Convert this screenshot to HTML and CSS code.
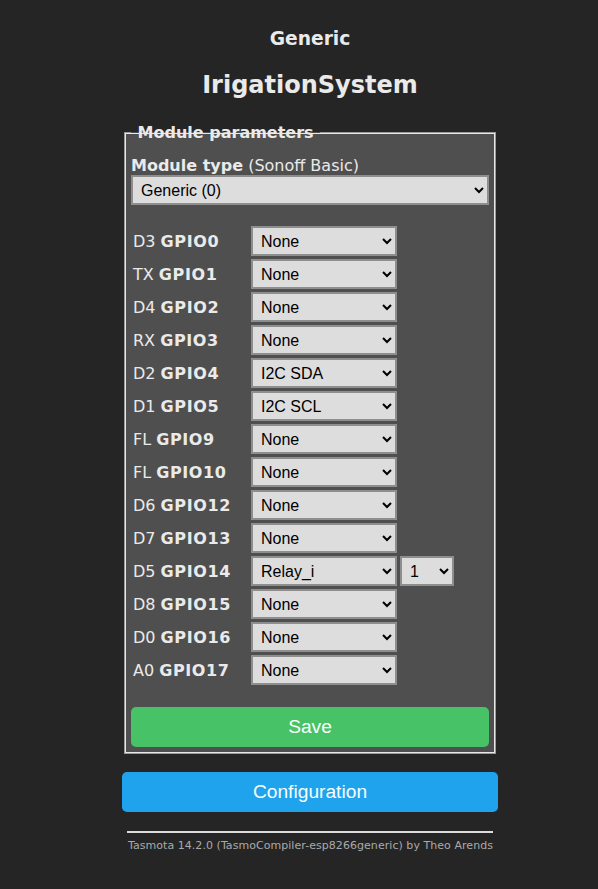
FILE: index.html
```html
<!DOCTYPE html>
<html>
<head>
<meta charset="utf-8">
<link rel="stylesheet" href="styles.css">
</head>
<body>
<div class="page">
  <div class="head">
    <h3 class="dev">Generic</h3>
    <h2 class="host">IrigationSystem</h2>
  </div>
  <fieldset class="box">
    <legend class="lg"><b>&nbsp;Module parameters&nbsp;</b></legend>
    <div class="mtype"><b>Module type</b> (Sonoff Basic)</div>
    <select class="sel full"><option>Generic (0)</option></select>
    <div class="gpios">
      <div class="row"><span class="lbl">D3 <b>GPIO0</b></span><select class="sel"><option>None</option></select></div>
      <div class="row"><span class="lbl">TX <b>GPIO1</b></span><select class="sel"><option>None</option></select></div>
      <div class="row"><span class="lbl">D4 <b>GPIO2</b></span><select class="sel"><option>None</option></select></div>
      <div class="row"><span class="lbl">RX <b>GPIO3</b></span><select class="sel"><option>None</option></select></div>
      <div class="row"><span class="lbl">D2 <b>GPIO4</b></span><select class="sel"><option>I2C SDA</option></select></div>
      <div class="row"><span class="lbl">D1 <b>GPIO5</b></span><select class="sel"><option>I2C SCL</option></select></div>
      <div class="row"><span class="lbl">FL <b>GPIO9</b></span><select class="sel"><option>None</option></select></div>
      <div class="row"><span class="lbl">FL <b>GPIO10</b></span><select class="sel"><option>None</option></select></div>
      <div class="row"><span class="lbl">D6 <b>GPIO12</b></span><select class="sel"><option>None</option></select></div>
      <div class="row"><span class="lbl">D7 <b>GPIO13</b></span><select class="sel"><option>None</option></select></div>
      <div class="row"><span class="lbl">D5 <b>GPIO14</b></span><select class="sel"><option>Relay_i</option></select><select class="sel idx"><option>1</option></select></div>
      <div class="row"><span class="lbl">D8 <b>GPIO15</b></span><select class="sel"><option>None</option></select></div>
      <div class="row"><span class="lbl">D0 <b>GPIO16</b></span><select class="sel"><option>None</option></select></div>
      <div class="row"><span class="lbl">A0 <b>GPIO17</b></span><select class="sel"><option>None</option></select></div>
    </div>
    <button class="btn bgrn">Save</button>
  </fieldset>
  <button class="btn cfg">Configuration</button>
  <div class="foot">
    <hr class="rule">
    <div class="ver">Tasmota 14.2.0 (TasmoCompiler-esp8266generic) by Theo Arends</div>
  </div>
</div>
</body>
</html>
```
FILE: styles.css
```css
html, body {
  margin: 0;
  padding: 0;
  background: #252525;
}
body {
  color: #eaeaea;
  font-family: "DejaVu Sans", Verdana, sans-serif;
  font-size: 16px;
}
.page {
  width: 376px;
  margin-left: 122px;
}
.head {
  text-align: center;
}
.dev {
  margin: 28px 0 0;
  font-size: 18.7px;
  line-height: 22px;
}
.host {
  margin: 21px 0 0;
  font-size: 24px;
  line-height: 28px;
}
.box {
  margin: 24px 2px 0;
  padding: 0 6px 6px;
  background: #4f4f4f;
  border: 1px solid #9a9a9a;
  box-shadow: inset 0 0 0 1px #e8e8e8;
}
.lg {
  padding: 0 1px;
  line-height: 19px;
  font-size: 16px;
}
.mtype {
  margin-top: 14px;
  line-height: 19px;
}
.sel {
  display: block;
  height: 30px;
  width: 146px;
  margin: 0;
  padding: 0 0 0 4px;
  background: #dddddd;
  color: #000;
  border: 2px solid #8e8e8e;
  border-radius: 0;
  font-family: "Liberation Sans", Arial, sans-serif;
  font-size: 16px;
}
.full {
  width: 358px;
}
.idx {
  width: 54px;
}
.gpios {
  margin-top: 21px;
  display: flex;
  flex-direction: column;
  gap: 3px;
}
.row {
  display: flex;
  align-items: center;
  gap: 3px;
}
.lbl {
  width: 118px;
  padding-left: 2px;
  margin-right: -3px;
  line-height: 19px;
}
.lbl b {
  letter-spacing: 0.6px;
}
.btn {
  display: block;
  width: 100%;
  height: 40px;
  border: 0;
  border-radius: 5px;
  color: #faffff;
  font-family: "Liberation Sans", Arial, sans-serif;
  font-size: 19.2px;
  padding: 0;
}
.bgrn {
  background: #47c266;
  margin-top: 22px;
  width: 358px;
}
.cfg {
  background: #1fa3ec;
  margin-top: 18px;
}
.foot {
  padding: 0 5px;
  text-align: right;
  font-size: 11px;
  color: #aaaaaa;
}
.rule {
  margin: 19px 0 0;
  height: 0;
  border: 0;
  border-top: 2px solid #dcdcdc;
}
.ver {
  margin-top: 6px;
  line-height: 14px;
  white-space: nowrap;
  letter-spacing: 0.05px;
}
```
